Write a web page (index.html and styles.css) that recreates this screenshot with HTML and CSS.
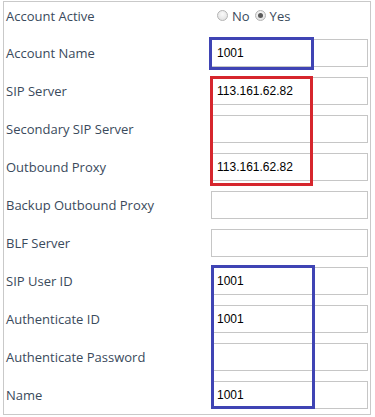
FILE: index.html
```html
<!DOCTYPE html>
<html lang="en">
<head>
    <meta charset="UTF-8">
    <title>Account Settings</title>
    <link rel="stylesheet" href="styles.css">
</head>
<body>
    <div class="panel">
        <!-- Account -->
        <div class="row first">
            <label class="label">Account Active</label>
            <div class="radios">
                <span class="radio"></span><span class="radio-text">No</span>
                <span class="radio checked"></span><span class="radio-text">Yes</span>
            </div>
        </div>
        <div class="row">
            <label class="label">Account Name</label>
            <input class="field" type="text" value="1001">
        </div>

        <!-- Servers -->
        <div class="row">
            <label class="label">SIP Server</label>
            <input class="field" type="text" value="113.161.62.82">
        </div>
        <div class="row">
            <label class="label">Secondary SIP Server</label>
            <input class="field" type="text" value="">
        </div>
        <div class="row">
            <label class="label">Outbound Proxy</label>
            <input class="field" type="text" value="113.161.62.82">
        </div>
        <div class="row">
            <label class="label">Backup Outbound Proxy</label>
            <input class="field" type="text" value="">
        </div>
        <div class="row">
            <label class="label">BLF Server</label>
            <input class="field" type="text" value="">
        </div>

        <!-- Credentials -->
        <div class="row">
            <label class="label">SIP User ID</label>
            <input class="field" type="text" value="1001">
        </div>
        <div class="row">
            <label class="label">Authenticate ID</label>
            <input class="field" type="text" value="1001">
        </div>
        <div class="row">
            <label class="label">Authenticate Password</label>
            <input class="field" type="password" value="">
        </div>
        <div class="row">
            <label class="label">Name</label>
            <input class="field" type="text" value="1001">
        </div>

        <!-- Highlight boxes -->
        <div class="mark blue mark-name"></div>
        <div class="mark red mark-server"></div>
        <div class="mark blue mark-user"></div>
    </div>
</body>
</html>
```

FILE: styles.css
```css
/* General Styling */
body {
    margin: 0;
    padding: 1px 3px 0 3px;
    background: #fff;
    font-family: 'Open Sans', sans-serif;
}

/* Panel */
.panel {
    position: relative;
    width: 368px;
    border: 1px solid #c9c9c9;
    padding: 0 4px 0 2px;
    box-sizing: border-box;
}

.row {
    display: grid;
    grid-template-columns: 205px 157px;
    align-items: center;
    height: 38px;
}

.row.first {
    height: 32px;
    padding-bottom: 5px;
    box-sizing: border-box;
}

.label {
    font-size: 13px;
    color: #3a4a5c;
}

/* Inputs */
.field {
    width: 157px;
    height: 28px;
    box-sizing: border-box;
    border: 1px solid #c6c6c6;
    padding: 0 5px;
    margin: 0;
    font-family: 'Liberation Sans', Arial, sans-serif;
    font-size: 12px;
    color: #000;
    background: #fff;
    outline: none;
}

/* Radio buttons */
.radios {
    display: flex;
    align-items: center;
    padding-left: 6px;
    font-size: 13px;
    color: #3a4a5c;
}

.radio {
    width: 11px;
    height: 11px;
    box-sizing: border-box;
    border: 1px solid #b4b4b4;
    border-radius: 50%;
    background: radial-gradient(circle at 50% 35%, #fafafa, #dcdcdc);
    position: relative;
}

.radio.checked::after {
    content: "";
    position: absolute;
    left: 2px;
    top: 2px;
    width: 5px;
    height: 5px;
    border-radius: 50%;
    background: #5a5a5a;
}

.radio-text {
    margin: 0 5px 0 4px;
}

/* Highlight boxes */
.mark {
    position: absolute;
    border: 3px solid;
    box-sizing: border-box;
    pointer-events: none;
}

.mark.blue {
    border-color: #3f44b4;
}

.mark.red {
    border-color: #d6262d;
}

.mark-name {
    left: 205px;
    top: 35px;
    width: 105px;
    height: 33px;
}

.mark-server {
    left: 206px;
    top: 74px;
    width: 103px;
    height: 110px;
}

.mark-user {
    left: 207px;
    top: 263px;
    width: 104px;
    height: 144px;
}
```
